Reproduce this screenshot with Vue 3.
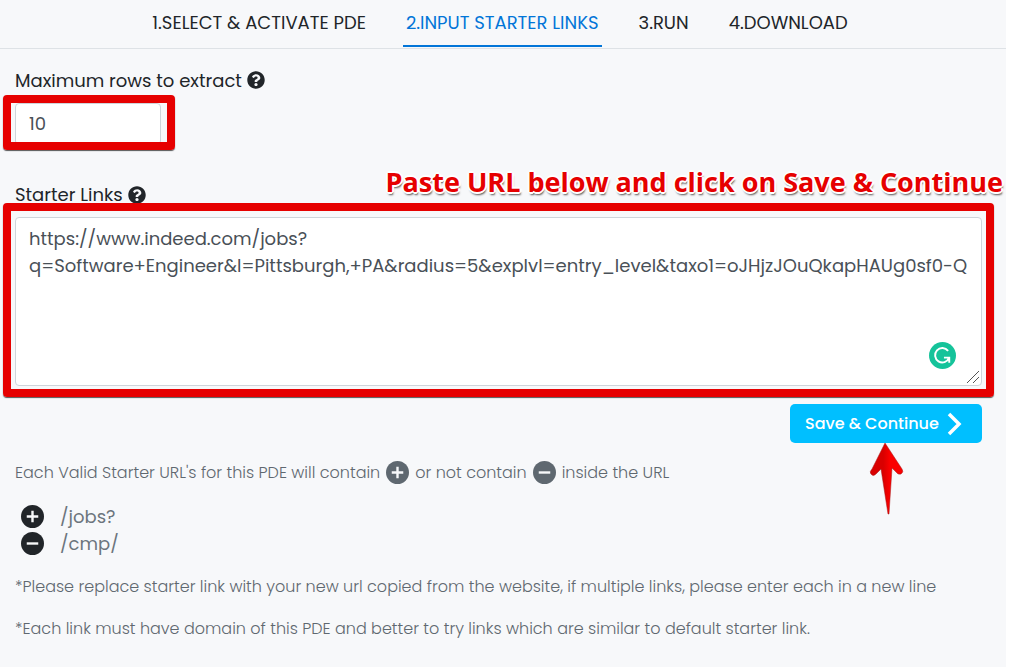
<script setup>
import { ref } from 'vue'

const tabs = ['1.SELECT & ACTIVATE PDE', '2.INPUT STARTER LINKS', '3.RUN', '4.DOWNLOAD']
const active = ref(1)
const maxRows = ref('10')
const links = ref('https://www.indeed.com/jobs?\nq=Software+Engineer&l=Pittsburgh,+PA&radius=5&explvl=entry_level&taxo1=oJHjzJOuQkapHAUg0sf0-Q')
const rules = [
  { sign: 'plus', text: '/jobs?' },
  { sign: 'minus', text: '/cmp/' },
]
const discPath = 'M12 0a12 12 0 1 0 0 24 12 12 0 0 0 0-24z'
const signPath = { plus: 'M6 12h12M12 6v12', minus: 'M6 12h12' }
const helpPath = 'M504 256c0 137-111 248-248 248S8 393 8 256 119 8 256 8s248 111 248 248zM262.700 90c-54.500 0-89.300 23-116.500 63.800-3.500 5.300-2.400 12.400 2.700 16.300l34.700 26.300c5.200 3.900 12.600 3 16.700-2.100 17.900-22.700 30.100-35.800 57.300-35.800 20.400 0 45.700 13.100 45.700 33 0 15-12.400 22.700-32.500 34C247.100 238.500 216 254.900 216 296v4c0 6.600 5.400 12 12 12h56c6.600 0 12-5.400 12-12v-1.300c0-28.500 83.200-29.600 83.200-106.700 0-58-60.200-102-116.500-102zM256 338c-25.400 0-46 20.600-46 46s20.600 46 46 46 46-20.600 46-46-20.600-46-46-46z'
</script>

<template>
  <main class="page">
    <nav class="tabs">
      <a
        v-for="(tab, i) in tabs"
        :key="tab"
        href="#"
        class="tab"
        :class="{ active: i === active }"
        @click.prevent="active = i"
      >{{ tab }}</a>
    </nav>

    <form class="content" @submit.prevent>
      <div class="label-row">
        <label for="rows">Maximum rows to extract</label>
        <svg class="help" viewBox="0 0 512 512" aria-hidden="true">
          <path fill="currentColor" :d="helpPath" />
        </svg>
      </div>
      <div class="mark mark-rows">
        <input id="rows" v-model="maxRows" class="field rows" type="text">
      </div>

      <div class="links-head">
        <div class="label-row">
          <label for="links">Starter Links</label>
          <svg class="help" viewBox="0 0 512 512" aria-hidden="true">
            <path fill="currentColor" :d="helpPath" />
          </svg>
        </div>
        <strong class="callout">Paste URL below and click on Save &amp; Continue</strong>
      </div>
      <div class="mark mark-links">
        <textarea id="links" v-model="links" class="field links" spellcheck="false"></textarea>
        <svg class="grammar" viewBox="0 0 28 28" aria-hidden="true">
          <circle cx="14" cy="14" r="14" fill="#15c39a" />
          <path d="M19.800 9.200A7.500 7.500 0 1 0 20.800 16.500M15.500 16.200H21V21.500" fill="none" stroke="#fff" stroke-width="2" />
        </svg>
        <svg class="grip" viewBox="0 0 14 14" aria-hidden="true">
          <path d="M1 13L13 1M7 13L13 7" fill="none" stroke="#555" />
        </svg>
      </div>

      <div class="actions">
        <button class="save" type="submit">
          <span>Save &amp; Continue</span>
          <svg class="chevron" viewBox="0 0 16 24" aria-hidden="true">
            <path d="M2 2l10 10L2 22" fill="none" stroke="currentColor" stroke-width="3.500" />
          </svg>
        </button>
        <svg class="pointer" viewBox="0 0 36 74" aria-hidden="true">
          <defs>
            <linearGradient id="pointer-fill">
              <stop offset="0.400" stop-color="#d90000" />
              <stop offset="0.600" stop-color="#fa0000" />
            </linearGradient>
          </defs>
          <path d="M16 1L33 27Q35 30 32 32Q29 33 27 30L23 26L20 72H19L12 27L7 32Q4 35 2 32Q0 30 3 27Z" fill="url(#pointer-fill)" stroke="#a51b1b" stroke-width="0.500" />
        </svg>
      </div>

      <p class="hint">
        <span>Each Valid Starter URL's for this PDE will contain</span>
        <svg class="sign" viewBox="0 0 24 24" aria-label="plus">
          <path :d="discPath" fill="currentColor" />
          <path :d="signPath.plus" stroke="#f7f8fa" stroke-width="2.500" />
        </svg>
        <span>or not contain</span>
        <svg class="sign" viewBox="0 0 24 24" aria-label="minus">
          <path :d="discPath" fill="currentColor" />
          <path :d="signPath.minus" stroke="#f7f8fa" stroke-width="2.500" />
        </svg>
        <span>inside the URL</span>
      </p>

      <ul class="rules">
        <li v-for="rule in rules" :key="rule.text">
          <svg class="sign dark" viewBox="0 0 24 24" :aria-label="rule.sign">
            <path :d="discPath" fill="currentColor" />
            <path :d="signPath[rule.sign]" stroke="#f7f8fa" stroke-width="2.500" />
          </svg>
          <span>{{ rule.text }}</span>
        </li>
      </ul>

      <p class="note">*Please replace starter link with your new url copied from the website, if multiple links, please enter each in a new line</p>
      <p class="note">*Each link must have domain of this PDE and better to try links which are similar to default starter link.</p>
    </form>
  </main>
</template>

<style>
body {
  background: #fff;
}
</style>

<style scoped>
.page {
  min-height: 100vh;
  margin-right: 5px;
  display: flow-root;
  font-family: Poppins, Inter, "Liberation Sans", sans-serif;
  font-size: 18px;
  color: #212529;
  background: #f7f8fa;
}
.page * {
  box-sizing: border-box;
}
.tabs {
  display: flex;
  justify-content: center;
  gap: 34px;
  height: 49px;
  padding-right: 6px;
  border-bottom: 1px solid #dee2e6;
}
.tab {
  height: 47px;
  padding: 0 3px;
  line-height: 46px;
  color: inherit;
  text-decoration: none;
  white-space: nowrap;
}
.tab.active {
  color: #0275d8;
  border-bottom: 2px solid #0275d8;
}
.content {
  padding: 18px 12px 0 3px;
}
.label-row {
  display: flex;
  align-items: center;
  gap: 5px;
  height: 28px;
  padding: 0 0 2px 12px;
  white-space: nowrap;
}
.help {
  width: 18px;
  height: 18px;
}
.mark {
  border: 8px solid #e60000;
  border-radius: 4px;
  box-shadow: 0 1px 1px #555;
}
.mark-rows {
  width: 172px;
  height: 55px;
  overflow: hidden;
}
.field {
  display: block;
  font: inherit;
  color: #495057;
  background: #fff;
  border: 1px solid #ced4da;
  border-radius: 4px;
}
.rows {
  width: 146px;
  height: 42px;
  margin-left: 4px;
  padding: 0 13px 2px;
}
.links-head {
  display: flex;
  justify-content: space-between;
  align-items: center;
  height: 53px;
  margin-right: -9px;
}
.links-head .label-row {
  padding-top: 36px;
  padding-bottom: 0;
}
.callout {
  font: 700 27px/36px "Open Sans", "Noto Sans", sans-serif;
  color: #e60000;
  white-space: nowrap;
  padding-top: 10px;
  text-shadow: 2px 0 #fff, -2px 0 #fff, 0 2px #fff, 0 -2px #fff, 1px 1px #fff, -1px 1px #fff, 1px 3px 2px #555;
}
.mark-links {
  position: relative;
  padding: 6px 4px 3px;
}
.links {
  width: 100%;
  height: 169px;
  padding: 7px 8px 7px 13px;
  line-height: 27px;
  resize: none;
  outline: none;
}
.grammar {
  position: absolute;
  right: 30px;
  bottom: 20px;
  width: 27px;
  height: 27px;
}
.grip {
  position: absolute;
  right: 6px;
  bottom: 5px;
  width: 14px;
  height: 14px;
  pointer-events: none;
}
.actions {
  position: relative;
  display: flex;
  justify-content: flex-end;
  padding: 7px 12px 0 0;
}
.save {
  display: flex;
  align-items: center;
  justify-content: space-between;
  width: 192px;
  height: 39px;
  padding: 0 19px 0 15px;
  font: inherit;
  font-size: 16px;
  font-weight: 500;
  color: #fff;
  background: #00bfff;
  border: 0;
  border-radius: 5px;
  white-space: nowrap;
}
.chevron {
  width: 16px;
  height: 24px;
}
.pointer {
  position: absolute;
  top: 45px;
  right: 89px;
  width: 36px;
  height: 74px;
}
.hint {
  display: flex;
  align-items: center;
  gap: 6px;
  height: 28px;
  margin: 15px 0 0;
  padding-left: 12px;
  font-size: 16px;
  font-weight: 300;
  color: #5f6870;
  white-space: nowrap;
}
.sign {
  width: 23px;
  height: 23px;
}
.dark {
  color: #212529;
}
.rules {
  margin: 17px 0 0;
  padding: 0 0 0 18px;
  list-style: none;
  color: #6c757d;
}
.rules li {
  display: flex;
  align-items: center;
  gap: 16px;
  height: 27px;
}
.note {
  margin: 18px 0;
  padding-left: 12px;
  font-size: 16px;
  font-weight: 300;
  line-height: 24px;
  color: #5f6870;
}
</style>
